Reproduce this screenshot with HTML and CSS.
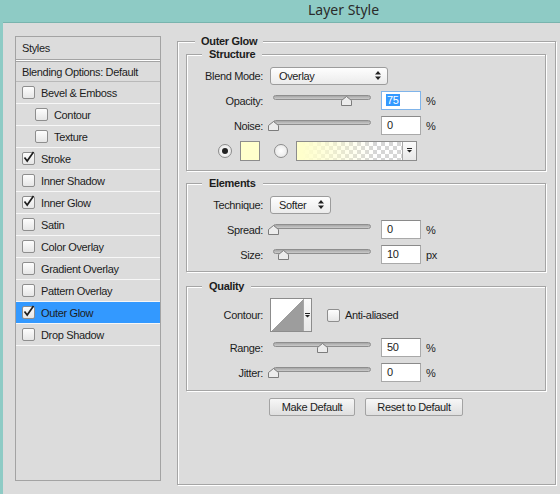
FILE: index.html
```html
<!DOCTYPE html>
<html lang="en">
<head>
<meta charset="UTF-8" />
<meta name="viewport" content="width=device-width, initial-scale=1" />
<title>Layer Style</title>
<link rel="stylesheet" href="styles.css">
</head>
<body>

<div class="titlebar">Layer Style</div>

<div class="dialog">
  <ul class="style-list">
    <li class="list-head">Styles</li>
    <li class="list-blend">Blending Options: Default</li>
    <li><span class="check"></span>Bevel &amp; Emboss</li>
    <li class="sub"><span class="check"></span>Contour</li>
    <li class="sub"><span class="check"></span>Texture</li>
    <li><span class="check"><svg viewBox="0 0 13 13"><path d="M2.5 6.5 L5.2 10 L11.5 1"/></svg></span>Stroke</li>
    <li><span class="check"></span>Inner Shadow</li>
    <li><span class="check"><svg viewBox="0 0 13 13"><path d="M2.5 6.5 L5.2 10 L11.5 1"/></svg></span>Inner Glow</li>
    <li><span class="check"></span>Satin</li>
    <li><span class="check"></span>Color Overlay</li>
    <li><span class="check"></span>Gradient Overlay</li>
    <li><span class="check"></span>Pattern Overlay</li>
    <li class="selected"><span class="check"><svg viewBox="0 0 13 13"><path d="M2.5 6.5 L5.2 10 L11.5 1"/></svg></span>Outer Glow</li>
    <li><span class="check"></span>Drop Shadow</li>
  </ul>

  <div class="settings">
    <fieldset class="group outer">
      <legend>Outer Glow</legend>

      <fieldset class="group">
        <legend>Structure</legend>
        <div class="row">
          <label class="lbl">Blend Mode:</label>
          <div class="select wide">Overlay
            <svg class="updown" viewBox="0 0 6 9"><path d="M0 3.5 L3 0 L6 3.5Z M0 5.5 L6 5.5 L3 9Z"/></svg>
          </div>
        </div>
        <div class="row">
          <label class="lbl">Opacity:</label>
          <div class="slider"><div class="track"></div>
            <svg class="thumb" style="left: 75%" viewBox="0 0 11 10"><path d="M0.5 9.5 V4.5 L5.5 0.5 L10.5 4.5 V9.5Z"/></svg>
          </div>
          <div class="num focus"><span class="sel">75</span></div>
          <span class="unit">%</span>
        </div>
        <div class="row">
          <label class="lbl">Noise:</label>
          <div class="slider"><div class="track"></div>
            <svg class="thumb" style="left: 0%" viewBox="0 0 11 10"><path d="M0.5 9.5 V4.5 L5.5 0.5 L10.5 4.5 V9.5Z"/></svg>
          </div>
          <div class="num">0</div>
          <span class="unit">%</span>
        </div>
        <div class="row colors">
          <span class="radio on"></span>
          <span class="swatch"></span>
          <span class="radio"></span>
          <div class="gradient">
            <span class="grad-fill"></span>
            <span class="drop"><svg viewBox="0 0 5 5"><path d="M0 0 H5 V1 H0Z M0 2 H5 L2.5 4.5Z"/></svg></span>
          </div>
        </div>
      </fieldset>

      <fieldset class="group elements">
        <legend>Elements</legend>
        <div class="row">
          <label class="lbl">Technique:</label>
          <div class="select short">Softer
            <svg class="updown" viewBox="0 0 6 9"><path d="M0 3.5 L3 0 L6 3.5Z M0 5.5 L6 5.5 L3 9Z"/></svg>
          </div>
        </div>
        <div class="row">
          <label class="lbl">Spread:</label>
          <div class="slider"><div class="track"></div>
            <svg class="thumb" style="left: 0%" viewBox="0 0 11 10"><path d="M0.5 9.5 V4.5 L5.5 0.5 L10.5 4.5 V9.5Z"/></svg>
          </div>
          <div class="num">0</div>
          <span class="unit">%</span>
        </div>
        <div class="row">
          <label class="lbl">Size:</label>
          <div class="slider"><div class="track"></div>
            <svg class="thumb" style="left: 10.5%" viewBox="0 0 11 10"><path d="M0.5 9.5 V4.5 L5.5 0.5 L10.5 4.5 V9.5Z"/></svg>
          </div>
          <div class="num">10</div>
          <span class="unit">px</span>
        </div>
      </fieldset>

      <fieldset class="group quality">
        <legend>Quality</legend>
        <div class="row contour-row">
          <label class="lbl">Contour:</label>
          <div class="contour">
            <span class="curve"></span>
            <span class="drop"><svg viewBox="0 0 5 5"><path d="M0 0 H5 V1 H0Z M0 2 H5 L2.5 4.5Z"/></svg></span>
          </div>
          <span class="check"></span>
          <span class="check-label">Anti-aliased</span>
        </div>
        <div class="row">
          <label class="lbl">Range:</label>
          <div class="slider"><div class="track"></div>
            <svg class="thumb" style="left: 51%" viewBox="0 0 11 10"><path d="M0.5 9.5 V4.5 L5.5 0.5 L10.5 4.5 V9.5Z"/></svg>
          </div>
          <div class="num">50</div>
          <span class="unit">%</span>
        </div>
        <div class="row">
          <label class="lbl">Jitter:</label>
          <div class="slider"><div class="track"></div>
            <svg class="thumb" style="left: 0%" viewBox="0 0 11 10"><path d="M0.5 9.5 V4.5 L5.5 0.5 L10.5 4.5 V9.5Z"/></svg>
          </div>
          <div class="num">0</div>
          <span class="unit">%</span>
        </div>
      </fieldset>

      <div class="actions">
        <button class="btn make">Make Default</button>
        <button class="btn reset">Reset to Default</button>
      </div>
    </fieldset>
  </div>
</div>

</body>
</html>
```

FILE: styles.css
```css
* {
  box-sizing: border-box;
}
body {
  margin: 0;
  height: 494px;
  overflow: hidden;
  background: #8ecbc5;
  font-family: "Liberation Sans", Arial, sans-serif;
  font-size: 11px;
  letter-spacing: -0.35px;
  color: #1c1c1c;
}
.titlebar {
  height: 22px;
  padding-left: 308px;
  font-family: "Noto Sans", "Liberation Sans", sans-serif;
  font-size: 14px;
  line-height: 20px;
  letter-spacing: 0;
  color: #2b2b2b;
}
.dialog {
  margin-left: 3px;
  height: 472px;
  background: #dcdcdc;
  border-top: 1px solid #79b4ae;
  display: flex;
  align-items: flex-start;
  gap: 16px;
  padding: 13px 0 0 12px;
}

/* left list of effects */
.style-list {
  list-style: none;
  margin: 0;
  padding: 0;
  width: 146px;
  height: 445px;
  border: 1px solid #a3a3a3;
  flex-shrink: 0;
}
.style-list li {
  display: flex;
  align-items: center;
  height: 22px;
  padding-left: 6px;
  border-bottom: 1px solid #f7f7f7;
}
.style-list li.list-head {
  height: 23px;
  border-bottom: 1px solid #a3a3a3;
  box-shadow: 0 1px 0 #fff;
  margin-bottom: 1px;
}
.style-list li.list-blend {
  height: 21px;
  border-top: 1px solid #a3a3a3;
  border-bottom: 1px solid #b9b9b9;
}
.style-list li.sub {
  padding-left: 19px;
}
.style-list li.selected {
  background: #3399ff;
}
.check {
  display: inline-block;
  position: relative;
  width: 13px;
  height: 13px;
  margin-right: 6px;
  border: 1px solid #8e8e8e;
  border-radius: 2px;
  background: linear-gradient(#fdfdfd, #e6e6e6);
  flex-shrink: 0;
}
.check svg {
  position: absolute;
  left: -1px;
  top: -2px;
  width: 13px;
  height: 13px;
  overflow: visible;
}
.check svg path {
  fill: none;
  stroke: #1e1e1e;
  stroke-width: 1.7;
}

/* right side groups */
.settings {
  margin-top: -1px;
}
.group {
  margin: 0;
  padding: 0;
  min-width: 0;
  border: 1px solid #a5a5a5;
  box-shadow: inset 1px 1px 0 #fff, 1px 1px 0 #fff;
}
.group legend {
  margin-left: 15px;
  padding: 0 7px;
  font-weight: bold;
  line-height: 13px;
  letter-spacing: -0.3px;
  background: #dcdcdc;
}
.group.outer {
  width: 379px;
  height: 450px;
}
.group.outer > legend {
  margin-left: 17px;
  padding: 0 6px;
}
.group .group {
  margin: 0 9px 0 8px;
  padding: 2px 0 7px;
}
.group .group.elements {
  margin-top: 6px;
  padding-bottom: 4px;
}
.group .group.quality {
  margin-top: 8px;
  padding-bottom: 5px;
}

.row {
  display: flex;
  align-items: center;
  height: 25px;
}
.lbl {
  width: 76px;
  text-align: right;
  margin-right: 7px;
  flex-shrink: 0;
}
.select {
  position: relative;
  height: 18px;
  line-height: 16px;
  padding-left: 8px;
  border: 1px solid #9c9c9c;
  border-radius: 3px;
  background: linear-gradient(#fefefe, #ebebeb);
}
.select.wide {
  width: 118px;
}
.select.short {
  width: 61px;
}
.updown {
  position: absolute;
  right: 6px;
  top: 3px;
  width: 6px;
  height: 9px;
  fill: #222;
}

.slider {
  position: relative;
  width: 98px;
  height: 11px;
  margin-left: 3px;
  margin-right: 10px;
}
.track {
  height: 5px;
  border: 1px solid #8e8e8e;
  border-radius: 3px;
  background: linear-gradient(#a6a6a6, #cbcbcb);
}
.thumb {
  position: absolute;
  top: 1px;
  width: 11px;
  height: 10px;
  margin-left: -5.5px;
}
.thumb path {
  fill: #ececec;
  stroke: #7c7c7c;
  stroke-width: 1;
}
.num {
  width: 40px;
  height: 19px;
  padding-left: 5px;
  line-height: 17px;
  background: #fff;
  border: 1px solid #a9a9a9;
  border-top-color: #8a8a8a;
}
.num.focus {
  border-color: #7fb4ea;
  padding-left: 4px;
}
.sel {
  background: #3399ff;
  color: #fff;
  padding: 0 1px;
}
.unit {
  margin-left: 5px;
}

/* colour row */
.colors {
  padding-left: 31px;
}
.radio {
  width: 14px;
  height: 14px;
  border: 1px solid #8c8c8c;
  border-radius: 50%;
  background: radial-gradient(#ffffff, #e2e2e2);
  display: flex;
  align-items: center;
  justify-content: center;
}
.radio.on::after {
  content: "";
  width: 6px;
  height: 6px;
  border-radius: 50%;
  background: #222;
}
.swatch {
  width: 20px;
  height: 20px;
  margin: 0 14px 0 8px;
  border: 1px solid #8c8c8c;
  background: #ffffcc;
}
.gradient {
  display: flex;
  width: 121px;
  height: 20px;
  margin-left: 8px;
  border: 1px solid #8c8c8c;
}
.grad-fill {
  flex: 1;
  background:
    linear-gradient(to right, #ffffcc 5%, rgba(255, 255, 204, 0) 75%),
    conic-gradient(#d6d6d6 25%, #fff 0 50%, #d6d6d6 0 75%, #fff 0) 0 0 / 8px 8px;
}
.drop {
  width: 14px;
  display: flex;
  align-items: center;
  justify-content: center;
  border-left: 1px solid #a8a8a8;
  background: linear-gradient(#fafafa, #e8e8e8);
}
.drop svg {
  width: 5px;
  height: 5px;
  fill: #222;
}

/* quality */
.contour-row {
  height: 40px;
}
.contour {
  display: flex;
  width: 42px;
  height: 34px;
  margin-right: 15px;
  border: 1px solid #8c8c8c;
}
.curve {
  flex: 1;
  background: linear-gradient(to top left, #9d9d9d 50%, #fff 50%);
}
.contour .drop {
  width: 8px;
}
.contour-row .check {
  margin-right: 5px;
}

.actions {
  display: flex;
  gap: 10px;
  margin: 7px 0 0 91px;
}
.btn {
  height: 18px;
  padding: 0;
  font-family: inherit;
  font-size: 11px;
  letter-spacing: -0.35px;
  color: #1c1c1c;
  border: 1px solid #a3a3a3;
  border-radius: 2px;
  background: linear-gradient(#f7f7f7, #dfdfdf);
}
.btn.make {
  width: 86px;
}
.btn.reset {
  width: 98px;
}
```
